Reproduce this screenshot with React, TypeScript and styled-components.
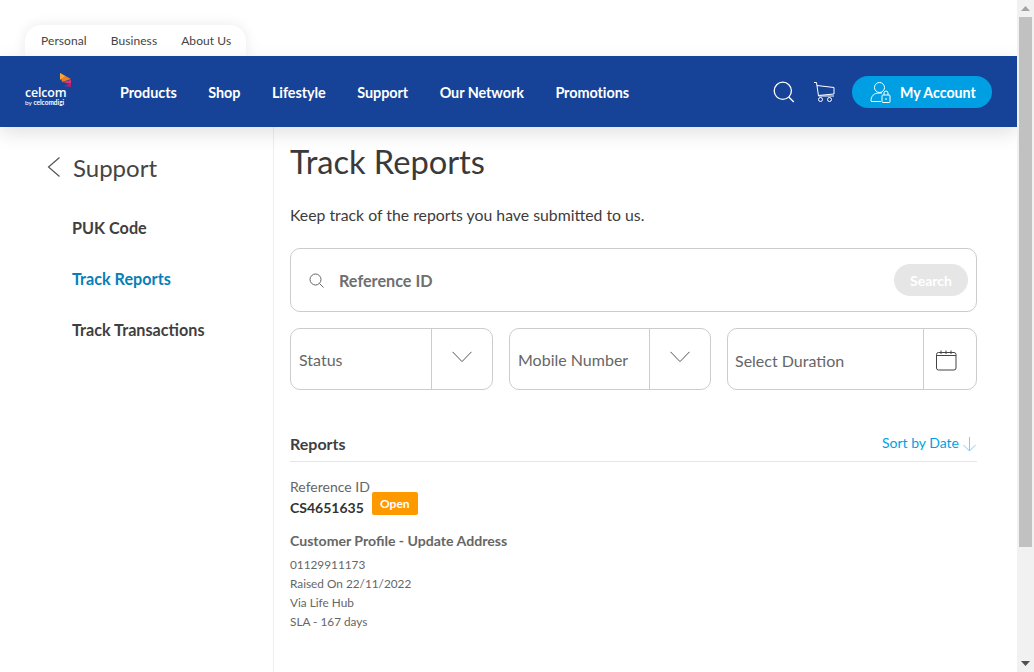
import React from "react";
import styled, { createGlobalStyle } from "styled-components";

const Global = createGlobalStyle`
  html, body { margin: 0; padding: 0; height: 672px; overflow: hidden; background: #fff; }
  body { font-family: Lato, "Liberation Sans", sans-serif; color: #333; }
  * { box-sizing: border-box; }
`;

const Shell = styled.div`display: flex; width: 1034px; height: 672px; overflow: hidden;`;
const Page = styled.div`width: 1017px; height: 672px; display: flex; flex-direction: column; overflow: hidden;`;
const TopStrip = styled.div`height: 56px; padding: 25px 0 0 25px; display: flex;`;
const TopTabs = styled.nav`
  width: 221px; height: 31px; display: flex; gap: 24px; padding: 8px 0 0 16px;
  background: #fff; border-radius: 16px 16px 0 0; box-shadow: 0 0 14px rgba(0,0,0,.09);
`;
const TopTab = styled.a`font-size: 12px; line-height: 15px; color: #444; letter-spacing: .08px;`;
const Header = styled.header`
  position: relative; z-index: 2; height: 71px; background: #164397; display: flex; align-items: center;
  padding: 0 25px; box-shadow: 0 6px 18px rgba(0,0,0,.12);
`;
const Logo = styled.div`position: relative; width: 41px; height: 34px; margin: 0 54px 0 0; color: #fff; top: 1px;`;
const LogoName = styled.div`position: absolute; left: 0; top: 11px; font-family: "Open Sans", sans-serif; font-size: 12.4px; line-height: 12px; font-weight: 600; letter-spacing: -.15px;`;
const LogoBy = styled.div`position: absolute; left: 0; top: 23px; font-size: 6.500px; line-height: 8px; white-space: nowrap; font-weight: 700; width: 41px; overflow: hidden;`;
const LogoMark = styled.svg`position: absolute; left: 35px; top: -3px;`;
const MainNav = styled.nav`display: flex; gap: 31.5px; padding-top: 3px;`;
const NavItem = styled.a`color: #fff; font-size: 14.4px; font-weight: 700; line-height: 20px; letter-spacing: -.05px;`;
const Actions = styled.div`margin-left: auto; display: flex; align-items: center;`;
const IconBtn = styled.svg`display: block; fill: none; stroke: #fff;`;
const Account = styled.a`
  width: 140px; height: 32px; margin: 0 0 0 17px; border-radius: 16px; background: #009fe3; color: #fff;
  display: flex; align-items: center; padding: 1px 0 0 18px; gap: 9px; font-weight: 700; font-size: 14.2px;
`;
const Body = styled.div`flex: 1; display: flex; min-height: 0;`;
const Side = styled.aside`width: 274px; border-right: 1px solid #eee; flex: none; padding: 26px 0 0 47px;`;
const SideHead = styled.div`display: flex; align-items: center; gap: 13px; height: 28px; font-size: 24px; color: #444; font-weight: 400;`;
const SideLink = styled.a<{ $active?: boolean }>`
  display: block; margin: 0 0 0 25px; font-size: 16.2px; font-weight: 700; line-height: 20px; height: 51px;
  color: ${(p) => (p.$active ? "#0780b8" : "#3f3f3f")};
`;
const SideLinks = styled.div`margin-top: 37px;`;
const Main = styled.main`width: 703px; padding: 15px 0 0 16px; flex: none;`;
const Title = styled.h1`margin: 0; font-size: 32.700px; font-weight: 400; line-height: 40px; color: #3a3a3a; letter-spacing: -.05px;`;
const Lead = styled.p`margin: 23px 0 0; font-size: 15.800px; line-height: 20px; color: #3c3c3c;`;
const SearchBox = styled.div`
  margin-top: 23px; height: 64px; border: 1px solid #ccc; border-radius: 10px; display: flex; align-items: center;
  padding: 0 8px 0 18px;
`;
const SearchLabel = styled.span`margin-left: 15px; font-size: 16.200px; font-weight: 700; color: #6f6f6f;`;
const SearchBtn = styled.button`
  margin-left: auto; width: 74px; height: 32px; border: 0; border-radius: 16px; background: #e6e6e6; color: #fff;
  font: 700 14px Lato, sans-serif; padding: 0;
`;
const Filters = styled.div`display: flex; gap: 16px; margin-top: 16px;`;
const Field = styled.div<{ $w: number }>`
  width: ${(p) => p.$w}px; height: 62px; border: 1px solid #ccc; border-radius: 10px; display: flex;
`;
const FieldLabel = styled.div<{ $pad: number; $drop?: number }>`
  flex: 1; padding-left: ${(p) => p.$pad}px; font-size: 16px; color: #666; display: flex; align-items: center;
  padding-top: ${(p) => p.$drop ?? 1}px;
`;
const FieldIcon = styled.div<{ $w: number; $top: number; $right?: number }>`
  width: ${(p) => p.$w}px; border-left: 1px solid #ccc; display: flex; justify-content: center;
  padding-top: ${(p) => p.$top}px; padding-right: ${(p) => p.$right ?? 0}px;
`;
const ReportsHead = styled.div`
  margin-top: 42px; height: 30px; border-bottom: 1px solid #e6e6e6; display: flex; justify-content: space-between;
`;
const ReportsTitle = styled.h2`margin: 0; font-size: 16px; font-weight: 700; line-height: 24px; color: #3f3f3f;`;
const Sort = styled.a`font-size: 14px; line-height: 22px; color: #009fe3; display: flex; gap: 4px; padding-right: 1px;`;
const RefLabel = styled.div`margin-top: 16px; font-size: 14px; line-height: 18px; color: #666;`;
const RefRow = styled.div`display: flex; align-items: flex-start; height: 28px;`;
const RefValue = styled.div`font-size: 14px; font-weight: 700; line-height: 24px; color: #333;`;
const Badge = styled.span`
  margin: -4px 0 0 8px; width: 46px; height: 23px; background: #ff9900; border-radius: 2px; color: #fff;
  font-size: 12px; font-weight: 700; display: flex; align-items: center; justify-content: center;
`;
const Subject = styled.div`margin-top: 7px; font-size: 14.100px; font-weight: 700; line-height: 20px; color: #666;`;
const Details = styled.div`margin-top: 4px; font-size: 11.800px; line-height: 19px; color: #666;`;
const Rail = styled.div`width: 17px; height: 672px; background: #f1f1f1; display: flex; flex-direction: column; flex: none;`;
const RailEnd = styled.div`height: 17px; display: flex; align-items: center; justify-content: center;`;
const Thumb = styled.div`margin-left: 2px; width: 13px; height: 530px; background: #c1c1c1;`;
const RailGap = styled.div`flex: 1;`;

const Chevron = () => (
  <svg width="20" height="12" viewBox="0 0 20 12" fill="none" stroke="#555" strokeWidth="1"><path d="M.5.8 10 10.6 19.500.8" /></svg>
);

export default function App() {
  return (
    <Shell>
      <Global />
      <Page>
        <TopStrip>
          <TopTabs>
            <TopTab>Personal</TopTab>
            <TopTab>Business</TopTab>
            <TopTab>About Us</TopTab>
          </TopTabs>
        </TopStrip>
        <Header>
          <Logo>
            <LogoMark width="11" height="14" viewBox="0 0 11 14">
              <path d="M0 0 11 6 2 9z" fill="#f07c22" />
              <path d="M0 0 5 3 0 7z" fill="#f2a93b" />
              <path d="M2 9 11 7V11z" fill="#d9357a" />
              <path d="M4 13 11 10V14z" fill="#b5206b" />
            </LogoMark>
            <LogoName>celcom</LogoName>
            <LogoBy><span style={{ fontWeight: 400 }}>by </span>celcomdigi</LogoBy>
          </Logo>
          <MainNav>
            {["Products", "Shop", "Lifestyle", "Support", "Our Network", "Promotions"].map((n) => (
              <NavItem key={n}>{n}</NavItem>
            ))}
          </MainNav>
          <Actions>
            <IconBtn width="22" height="22" viewBox="0 0 22 22" strokeWidth="1.3">
              <circle cx="9.800" cy="9.800" r="8.600" />
              <path d="m15.800 16 5 5" />
            </IconBtn>
            <IconBtn width="22" height="22" viewBox="0 0 22 22" strokeWidth="1" style={{ marginLeft: 18 }}>
              <path d="M1 1.500h2.500l2 13.500h15.500M4 4.500l17 2v6.500L5 14.500" />
              <circle cx="7.500" cy="18.500" r="2" />
              <circle cx="16.500" cy="18.500" r="2" />
            </IconBtn>
            <Account>
              <IconBtn width="21" height="22" viewBox="0 0 21 22" strokeWidth="1">
                <circle cx="9.500" cy="6.500" r="5" />
                <path d="M1 20c0-5 3-8 8-8h3" />
                <path d="M1 20.500h10" />
                <rect x="12" y="14" width="8" height="7.500" rx="1" />
                <path d="M14 14v-2a2 2 0 0 1 4 0v2" />
                <path d="M16 17v2" />
              </IconBtn>
              My Account
            </Account>
          </Actions>
        </Header>
        <Body>
          <Side>
            <SideHead>
              <svg width="13" height="20" viewBox="0 0 13 20" fill="none" stroke="#555" strokeWidth="1.200"><path d="M12.500.5 1.500 10l11 9.500" /></svg>
              Support
            </SideHead>
            <SideLinks>
              <SideLink>PUK Code</SideLink>
              <SideLink $active>Track Reports</SideLink>
              <SideLink>Track Transactions</SideLink>
            </SideLinks>
          </Side>
          <Main>
            <Title>Track Reports</Title>
            <Lead>Keep track of the reports you have submitted to us.</Lead>
            <SearchBox>
              <svg width="15" height="15" viewBox="0 0 15 15" fill="none" stroke="#666" strokeWidth="1"><circle cx="6.500" cy="6.500" r="5.500" /><path d="m10.500 10.500 4 4" /></svg>
              <SearchLabel>Reference ID</SearchLabel>
              <SearchBtn>Search</SearchBtn>
            </SearchBox>
            <Filters>
              <Field $w={203}>
                <FieldLabel $pad={8}>Status</FieldLabel>
                <FieldIcon $w={61} $top={22}><Chevron /></FieldIcon>
              </Field>
              <Field $w={202}>
                <FieldLabel $pad={8}>Mobile Number</FieldLabel>
                <FieldIcon $w={61} $top={22}><Chevron /></FieldIcon>
              </Field>
              <Field $w={250}>
                <FieldLabel $pad={7} $drop={3}>Select Duration</FieldLabel>
                <FieldIcon $w={53} $top={21} $right={8}>
                  <svg width="21" height="21" viewBox="0 0 21 21" fill="none" stroke="#444" strokeWidth="1">
                    <rect x=".5" y="2.500" width="19.500" height="17.500" rx="2" />
                    <path d="M.5 5.500h19.500M5 .5v3.500M10 .5v3.500M15 .5v3.500" />
                  </svg>
                </FieldIcon>
              </Field>
            </Filters>
            <ReportsHead>
              <ReportsTitle>Reports</ReportsTitle>
              <Sort>
                Sort by Date
                <svg width="13" height="15" viewBox="0 0 13 15" fill="none" stroke="#7fcdf0" strokeWidth="1" style={{ marginTop: 5 }}><path d="M6.500 0v14M.5 8l6 6 6-6" /></svg>
              </Sort>
            </ReportsHead>
            <RefLabel>Reference ID</RefLabel>
            <RefRow>
              <RefValue>CS4651635</RefValue>
              <Badge>Open</Badge>
            </RefRow>
            <Subject>Customer Profile - Update Address</Subject>
            <Details>
              <div>01129911173</div>
              <div>Raised On 22/11/2022</div>
              <div>Via Life Hub</div>
              <div>SLA - 167 days</div>
            </Details>
          </Main>
        </Body>
      </Page>
      <Rail>
        <RailEnd>
          <svg width="9" height="5" viewBox="0 0 9 5"><path d="M4.500 0 9 5H0z" fill="#a3a3a3" /></svg>
        </RailEnd>
        <Thumb />
        <RailGap />
        <RailEnd>
          <svg width="9" height="5" viewBox="0 0 9 5"><path d="M0 0h9L4.500 5z" fill="#505050" /></svg>
        </RailEnd>
      </Rail>
    </Shell>
  );
}
